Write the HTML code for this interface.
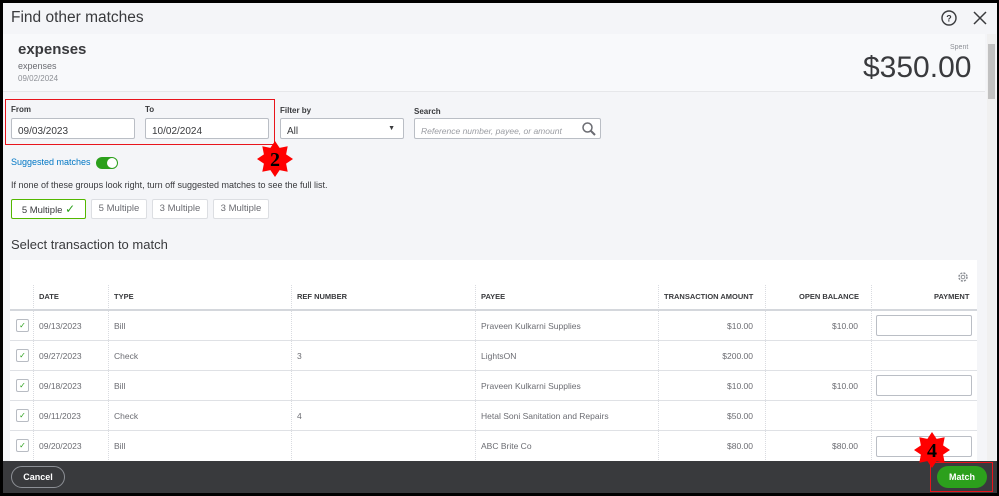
<!DOCTYPE html>
<html><head><meta charset="utf-8"><style>
*{box-sizing:border-box;margin:0;padding:0}
body{width:999px;height:496px;background:#000;font-family:"Liberation Sans",sans-serif;position:relative;overflow:hidden}
.a{position:absolute}
.inp{position:absolute;background:#fff;border:1px solid #babec5;border-radius:2px;font-size:10px;color:#393a3d;padding:7px 0 0 6px}
.lbl{position:absolute;font-size:8px;font-weight:bold;color:#393a3d}
.chip{position:absolute;top:199px;height:20px;border:1px solid #dcdee2;background:#fff;border-radius:2px;font-size:9.5px;color:#6b6c72;text-align:center;line-height:18px}
.th{position:absolute;top:292px;font-size:7.5px;font-weight:bold;color:#393a3d}
.row{position:absolute;left:10px;width:967px;height:1px;background:#dfe1e5}
.vl{position:absolute;top:285px;height:175px;border-left:1px dotted #d9dbe0}
.c{position:absolute;font-size:8.5px;color:#6b6c72}
.r{position:absolute;font-size:8.5px;color:#6b6c72;text-align:right;width:80px}
.cb{position:absolute;left:16px;width:13px;height:13px;border:1px solid #b8bcc3;border-radius:2px;background:#fff;color:#2ca01c;font-size:8px;text-align:center;line-height:11px}
.pay{position:absolute;left:876px;width:96px;height:21px;border:1px solid #babec5;border-radius:2px;background:#fff}
</style></head><body>
<div class="a" style="left:3px;top:3px;width:994px;height:458px;background:#f4f5f8"></div>
<div class="a" style="left:11px;top:9px;font-size:15.5px;color:#393a3d">Find other matches</div>
<svg class="a" style="left:940px;top:9px" width="18" height="18"><circle cx="9" cy="9" r="7" fill="none" stroke="#393a3d" stroke-width="1.4"/><text x="9" y="12.5" font-size="9" font-weight="bold" text-anchor="middle" fill="#393a3d" font-family="Liberation Sans">?</text></svg>
<svg class="a" style="left:973px;top:11px" width="14" height="14"><path d="M1 1L13 13M13 1L1 13" stroke="#393a3d" stroke-width="1.5"/></svg>
<div class="a" style="left:3px;top:34px;width:982px;height:58px;background:#f8f9fb;border-bottom:1px solid #e6e7ea"></div>
<div class="a" style="left:18px;top:41px;font-size:15px;font-weight:bold;color:#393a3d">expenses</div>
<div class="a" style="left:18px;top:61px;font-size:9px;color:#6b6c72">expenses</div>
<div class="a" style="left:18px;top:74px;font-size:8px;color:#8d9096">09/02/2024</div>
<div class="a" style="left:950px;top:44px;font-size:7px;color:#8d9096">Spent</div>
<div class="a" style="left:863px;top:51px;font-size:30px;color:#393a3d">$350.00</div>
<div class="a" style="left:987px;top:34px;width:9px;height:427px;background:#f0f0f0"></div>
<div class="a" style="left:988px;top:44px;width:7px;height:55px;background:#c1c1c1"></div>

<div class="lbl" style="left:11px;top:105px">From</div>
<div class="lbl" style="left:145px;top:105px">To</div>
<div class="lbl" style="left:280px;top:106px">Filter by</div>
<div class="lbl" style="left:414px;top:107px">Search</div>
<div class="inp" style="left:11px;top:118px;width:124px;height:21px">09/03/2023</div>
<div class="inp" style="left:145px;top:118px;width:124px;height:21px">10/02/2024</div>
<div class="inp" style="left:280px;top:118px;width:124px;height:21px">All<span style="position:absolute;right:8px;top:6px;font-size:7px">▼</span></div>
<div class="inp" style="left:414px;top:118px;width:187px;height:21px;color:#9a9ca2;font-style:italic;font-size:8.5px">Reference number, payee, or amount
<svg style="position:absolute;right:3px;top:2px" width="16" height="16"><circle cx="6.5" cy="6.5" r="4.5" fill="none" stroke="#6b6c72" stroke-width="1.5"/><path d="M10 10L14 14" stroke="#6b6c72" stroke-width="2"/></svg></div>
<div class="a" style="left:5px;top:99px;width:270px;height:46px;border:1.5px solid #e8141c"></div>

<div class="a" style="left:11px;top:157px;font-size:9px;color:#0077c5">Suggested matches</div>
<div class="a" style="left:96px;top:157px;width:22px;height:12px;border-radius:6px;background:#2ca01c"><div class="a" style="left:11px;top:1px;width:10px;height:10px;border-radius:5px;background:#fff"></div></div>
<div class="a" style="left:11px;top:180px;font-size:9px;color:#393a3d">If none of these groups look right, turn off suggested matches to see the full list.</div>
<div class="chip" style="left:11px;width:75px;border-color:#53b700;color:#393a3d">5 Multiple <span style="color:#2ca01c;font-size:12px">✓</span></div>
<div class="chip" style="left:91px;width:56px">5 Multiple</div>
<div class="chip" style="left:152px;width:56px">3 Multiple</div>
<div class="chip" style="left:213px;width:56px">3 Multiple</div>
<div class="a" style="left:11px;top:237px;font-size:13px;color:#393a3d">Select transaction to match</div>

<div class="a" style="left:10px;top:260px;width:967px;height:201px;background:#fff"></div>
<svg class="a" style="left:957px;top:271px" width="12" height="12"><circle cx="6" cy="6" r="4" fill="none" stroke="#8d9096" stroke-width="1.5" stroke-dasharray="2 1.2"/><circle cx="6" cy="6" r="1.8" fill="none" stroke="#8d9096"/></svg>
<div class="th" style="left:39px">DATE</div>
<div class="th" style="left:114px">TYPE</div>
<div class="th" style="left:297px">REF NUMBER</div>
<div class="th" style="left:481px">PAYEE</div>
<div class="th" style="left:664px">TRANSACTION AMOUNT</div>
<div class="th" style="left:799px">OPEN BALANCE</div>
<div class="th" style="left:934px">PAYMENT</div>
<div class="vl" style="left:33px"></div><div class="vl" style="left:108px"></div><div class="vl" style="left:291px"></div><div class="vl" style="left:475px"></div><div class="vl" style="left:658px"></div><div class="vl" style="left:765px"></div><div class="vl" style="left:871px"></div>
<div class="row" style="top:309px;height:2px;background:#d4d7dc"></div>
<div class="row" style="top:340px"></div><div class="row" style="top:370px"></div><div class="row" style="top:400px"></div><div class="row" style="top:430px"></div>

<div class="cb" style="top:319px">✓</div><div class="c" style="left:39px;top:321px">09/13/2023</div><div class="c" style="left:114px;top:321px">Bill</div><div class="c" style="left:481px;top:321px">Praveen Kulkarni Supplies</div><div class="r" style="left:673px;top:321px">$10.00</div><div class="r" style="left:778px;top:321px">$10.00</div><div class="pay" style="top:315px"></div>
<div class="cb" style="top:349px">✓</div><div class="c" style="left:39px;top:351px">09/27/2023</div><div class="c" style="left:114px;top:351px">Check</div><div class="c" style="left:297px;top:351px">3</div><div class="c" style="left:481px;top:351px">LightsON</div><div class="r" style="left:673px;top:351px">$200.00</div>
<div class="cb" style="top:379px">✓</div><div class="c" style="left:39px;top:381px">09/18/2023</div><div class="c" style="left:114px;top:381px">Bill</div><div class="c" style="left:481px;top:381px">Praveen Kulkarni Supplies</div><div class="r" style="left:673px;top:381px">$10.00</div><div class="r" style="left:778px;top:381px">$10.00</div><div class="pay" style="top:375px"></div>
<div class="cb" style="top:409px">✓</div><div class="c" style="left:39px;top:411px">09/11/2023</div><div class="c" style="left:114px;top:411px">Check</div><div class="c" style="left:297px;top:411px">4</div><div class="c" style="left:481px;top:411px">Hetal Soni Sanitation and Repairs</div><div class="r" style="left:673px;top:411px">$50.00</div>
<div class="cb" style="top:439px">✓</div><div class="c" style="left:39px;top:441px">09/20/2023</div><div class="c" style="left:114px;top:441px">Bill</div><div class="c" style="left:481px;top:441px">ABC Brite Co</div><div class="r" style="left:673px;top:441px">$80.00</div><div class="r" style="left:778px;top:441px">$80.00</div><div class="pay" style="top:436px"></div>

<div class="a" style="left:3px;top:461px;width:994px;height:32px;background:#393a3d"></div>
<div class="a" style="left:11px;top:466px;width:54px;height:22px;border:1px solid #8d9096;border-radius:11px;color:#fff;font-size:9px;font-weight:bold;text-align:center;line-height:20px">Cancel</div>
<div class="a" style="left:937px;top:466px;width:50px;height:22px;border-radius:11px;background:#2ca01c;color:#fff;font-size:9px;font-weight:bold;text-align:center;line-height:22px">Match</div>
<div class="a" style="left:930px;top:462px;width:63px;height:30px;border:1.5px solid #e8141c"></div>

<svg class="a" style="left:255px;top:139px" width="40" height="40"><polygon transform="translate(20,20)" fill="#f00" points="0,-18 4.6,-11.1 12.7,-12.7 11.1,-4.6 18,0 11.1,4.6 12.7,12.7 4.6,11.1 0,18 -4.6,11.1 -12.7,12.7 -11.1,4.6 -18,0 -11.1,-4.6 -12.7,-12.7 -4.6,-11.1"/><text x="20" y="27" text-anchor="middle" font-family="Liberation Serif" font-weight="bold" font-size="20" fill="#000">2</text></svg>
<svg class="a" style="left:912px;top:430px" width="40" height="40"><polygon transform="translate(20,20)" fill="#f00" points="0,-18 4.6,-11.1 12.7,-12.7 11.1,-4.6 18,0 11.1,4.6 12.7,12.7 4.6,11.1 0,18 -4.6,11.1 -12.7,12.7 -11.1,4.6 -18,0 -11.1,-4.6 -12.7,-12.7 -4.6,-11.1"/><text x="20" y="27" text-anchor="middle" font-family="Liberation Serif" font-weight="bold" font-size="20" fill="#000">4</text></svg>
</body></html>
